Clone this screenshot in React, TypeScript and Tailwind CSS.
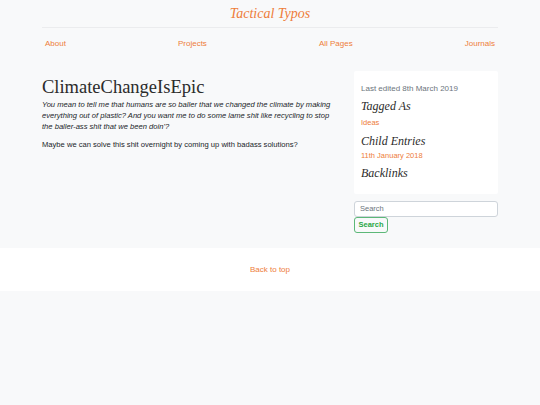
import React from "react";

const serif = { fontFamily: '"Liberation Serif", Georgia, serif' };

export default function App() {
  return (
    <div className="min-h-[405px] bg-[#f8f9fa] text-[#212529]" style={{ fontFamily: '"Liberation Sans", Arial, sans-serif' }}>
      <div className="mx-auto w-[456px]">
        <header className="pt-[6px]">
          <h1 className="text-center text-[14px] italic leading-[16px] text-[#ee7d3a]" style={serif}>
            Tactical Typos
          </h1>
          <div className="mt-[5px] border-t border-[#ebecee]" />
          <nav className="flex justify-between px-[3px] pt-[10px] text-[8px] text-[#ee7d3a]">
            <span>About</span>
            <span>Projects</span>
            <span>All Pages</span>
            <span>Journals</span>
          </nav>
        </header>
        <div className="mt-[21px] flex justify-between">
          <main className="w-[290px]">
            <h2 className="mt-[5px] text-[18.5px] leading-[22px] text-[#2b2b2b]" style={serif}>ClimateChangeIsEpic</h2>
            <p className="mt-[1px] text-[7.6px] italic leading-[11px]">
              You mean to tell me that humans are so baller that we changed the climate by making everything out of plastic? And you want me to do some lame shit like recycling to stop the baller-ass shit that we been doin'?
            </p>
            <p className="mt-[7px] text-[7.6px] leading-[11px]">Maybe we can solve this shit overnight by coming up with badass solutions?</p>
          </main>
          <aside className="w-[144px]">
            <div className="rounded-[2px] bg-white px-[7px] pb-[14px] pt-[13px]">
              <div className="text-[8px] leading-[10px] text-[#6c757d]">Last edited 8th March 2019</div>
              <div className="mt-[5px] text-[12px] italic leading-[14px] text-[#2b2b2b]" style={serif}>Tagged As</div>
              <div className="mt-[5px] text-[7.5px] leading-[10px] text-[#ee7d3a]">Ideas</div>
              <div className="mt-[6px] text-[12px] italic leading-[14px] text-[#2b2b2b]" style={serif}>Child Entries</div>
              <div className="mt-[3px] text-[7.5px] leading-[10px] text-[#ee7d3a]">11th January 2018</div>
              <div className="mt-[5px] text-[12px] italic leading-[14px] text-[#2b2b2b]" style={serif}>Backlinks</div>
            </div>
            <div className="mt-[7px] flex h-[16px] items-center rounded-[3px] border border-[#ced4da] bg-white px-[5px] text-[7.5px] text-[#6c757d]">Search</div>
            <div className="flex h-[16px] w-[34px] items-center justify-center rounded-[3px] border border-[#5cb878] text-[7.5px] font-bold text-[#28a745]">Search</div>
          </aside>
        </div>
      </div>
      <footer className="mt-[15px] flex h-[43px] items-center justify-center bg-white text-[8px] text-[#ee7d3a]">Back to top</footer>
    </div>
  );
}
